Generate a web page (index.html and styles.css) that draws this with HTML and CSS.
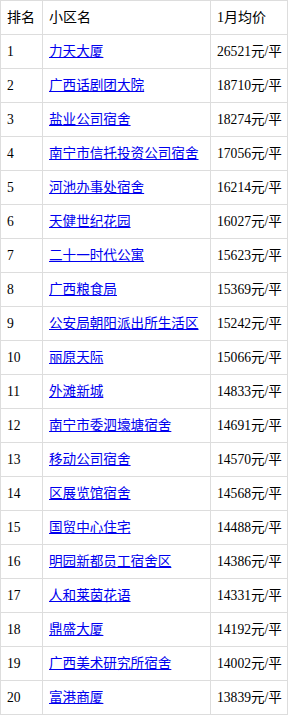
FILE: index.html
```html
<!DOCTYPE html>
<html lang="zh">
<head>
<meta charset="utf-8">
<link rel="stylesheet" href="styles.css">
</head>
<body>
<table class="rank">
<colgroup><col class="c1"><col class="c2"><col class="c3"></colgroup>
<thead>
<tr><th>排名</th><th>小区名</th><th>1月均价</th></tr>
</thead>
<tbody>
<tr><td>1</td><td><a href="#">力天大厦</a></td><td>26521元/平</td></tr>
<tr><td>2</td><td><a href="#">广西话剧团大院</a></td><td>18710元/平</td></tr>
<tr><td>3</td><td><a href="#">盐业公司宿舍</a></td><td>18274元/平</td></tr>
<tr><td>4</td><td><a href="#">南宁市信托投资公司宿舍</a></td><td>17056元/平</td></tr>
<tr><td>5</td><td><a href="#">河池办事处宿舍</a></td><td>16214元/平</td></tr>
<tr><td>6</td><td><a href="#">天健世纪花园</a></td><td>16027元/平</td></tr>
<tr><td>7</td><td><a href="#">二十一时代公寓</a></td><td>15623元/平</td></tr>
<tr><td>8</td><td><a href="#">广西粮食局</a></td><td>15369元/平</td></tr>
<tr><td>9</td><td><a href="#">公安局朝阳派出所生活区</a></td><td>15242元/平</td></tr>
<tr><td>10</td><td><a href="#">丽原天际</a></td><td>15066元/平</td></tr>
<tr><td>11</td><td><a href="#">外滩新城</a></td><td>14833元/平</td></tr>
<tr><td>12</td><td><a href="#">南宁市委泗壕塘宿舍</a></td><td>14691元/平</td></tr>
<tr><td>13</td><td><a href="#">移动公司宿舍</a></td><td>14570元/平</td></tr>
<tr><td>14</td><td><a href="#">区展览馆宿舍</a></td><td>14568元/平</td></tr>
<tr><td>15</td><td><a href="#">国贸中心住宅</a></td><td>14488元/平</td></tr>
<tr><td>16</td><td><a href="#">明园新都员工宿舍区</a></td><td>14386元/平</td></tr>
<tr><td>17</td><td><a href="#">人和莱茵花语</a></td><td>14331元/平</td></tr>
<tr><td>18</td><td><a href="#">鼎盛大厦</a></td><td>14192元/平</td></tr>
<tr><td>19</td><td><a href="#">广西美术研究所宿舍</a></td><td>14002元/平</td></tr>
<tr><td>20</td><td><a href="#">富港商厦</a></td><td>13839元/平</td></tr>
</tbody>
</table>
</body>
</html>
```
FILE: styles.css
```css
html, body {
  margin: 0;
  padding: 0;
  background: #fff;
}
body {
  font-family: "Liberation Serif", "Noto Sans CJK SC", serif;
  font-size: 13.6px;
  color: #000;
}
.rank {
  border-collapse: collapse;
  width: 287px;
  table-layout: fixed;
}
.c1 { width: 42px; }
.c2 { width: 168px; }
.c3 { width: 77px; }
.rank th,
.rank td {
  border: 1px solid #ddd;
  padding: 8px 0 8px 6px;
  line-height: 17px;
  text-align: left;
  font-weight: normal;
  white-space: nowrap;
  overflow: hidden;
}
.rank th {
  font-size: 14px;
}
.rank a {
  color: #00e;
  text-decoration: underline;
}
```
